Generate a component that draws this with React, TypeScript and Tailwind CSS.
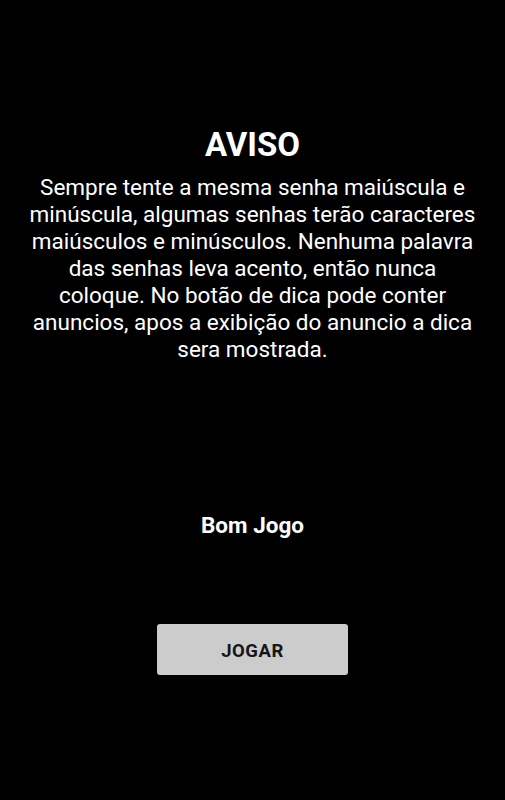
import React from 'react';

const AVISO_TEXT =
  'Sempre tente a mesma senha maiúscula e minúscula, algumas senhas terão caracteres maiúsculos e minúsculos. Nenhuma palavra das senhas leva acento, então nunca coloque. No botão de dica pode conter anuncios, apos a exibição do anuncio a dica sera mostrada.';

const App: React.FC = () => {
  return (
    <div className="w-[505px] h-[800px] bg-black flex flex-col items-center font-['Roboto',sans-serif] text-white">
      {/* Aviso */}
      <h1 className="mt-[126px] text-[33px] leading-[38px] font-bold">AVISO</h1>
      <p className="mt-[10px] px-[25px] text-center text-[22.5px] leading-[27px]">{AVISO_TEXT}</p>

      {/* Bom jogo */}
      <div className="mt-[149px] text-[22.5px] leading-[27px] font-bold">Bom Jogo</div>

      {/* Jogar */}
      <button className="mt-[85px] w-[191px] h-[51px] pt-[3px] rounded-[3px] bg-[#cccccc] text-[#161616] text-[18.5px] leading-none font-bold tracking-[0.5px]">
        JOGAR
      </button>
    </div>
  );
};

export default App;
